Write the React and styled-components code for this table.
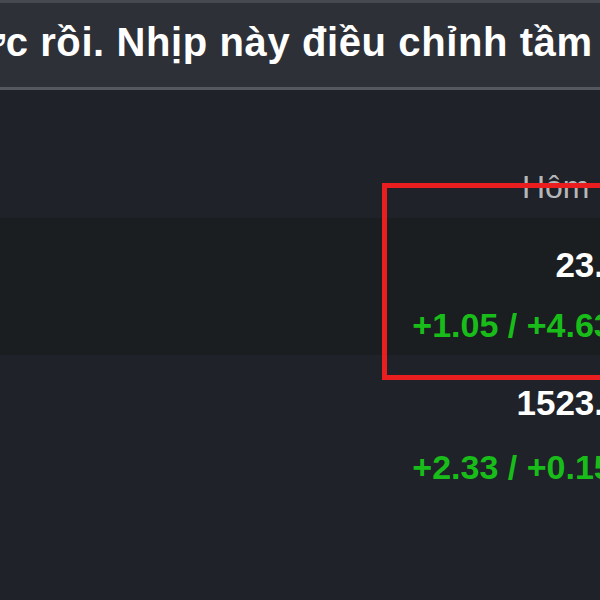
import styled, { createGlobalStyle } from "styled-components";

const GlobalStyle = createGlobalStyle`
	html, body {
		margin: 0;
		padding: 0;
		background: #1f2229;
		overflow: hidden;
	}
	body {
		font-family: "Liberation Sans", Arial, sans-serif;
	}
`;

const Viewport = styled.div`
	width: 600px;
	height: 600px;
	overflow: hidden;
	background: #1f2229;
`;

const TopBar = styled.div`
	height: 84px;
	border-top: 3px solid #464950;
	border-bottom: 3px solid #55585f;
	background: #2d3037;
	display: flex;
	align-items: flex-start;
	overflow: hidden;
	white-space: nowrap;
`;

const Headline = styled.h2`
	margin: 17px 0 0 -78px;
	color: #ffffff;
	font-size: 40px;
	line-height: 44px;
	font-weight: 700;
	letter-spacing: 0.6px;
`;

const Table = styled.div`
	position: relative;
	width: 650px;
`;

const Row = styled.div`
	display: grid;
	grid-template-columns: 1fr 280px;
	height: ${(p) => p.$height}px;
	background: ${(p) => (p.$dark ? "#1b1e21" : "#1f2229")};
`;

const Cell = styled.div`
	display: flex;
	flex-direction: column;
	align-items: flex-end;
	justify-content: ${(p) => (p.$bottom ? "flex-end" : "flex-start")};
	padding: ${(p) => p.$pad};
`;

const ColTitle = styled.span`
	color: #b6b7b9;
	font-size: 32px;
	line-height: 1;
`;

const Price = styled.span`
	color: #ffffff;
	font-size: 35px;
	font-weight: 700;
	line-height: 1;
`;

const Change = styled.span`
	margin-top: ${(p) => p.$gap}px;
	color: ${(p) => (p.$down ? "#e0312b" : "#19bd19")};
	font-size: 34px;
	font-weight: 700;
	line-height: 1;
`;

const Highlight = styled.div`
	position: absolute;
	left: 382px;
	top: 93px;
	width: 300px;
	height: 187px;
	border: 5px solid #ea1e1e;
	pointer-events: none;
`;

const rows = [
	{ price: "23.75", change: "+1.05 / +4.63%", dark: true, top: 29, gap: 26 },
	{ price: "1523.75", change: "+2.33 / +0.15%", dark: false, top: 30, gap: 30 },
];

export default function App() {
	return (
		<Viewport>
			<GlobalStyle />
			<TopBar>
				<Headline>được rồi. Nhịp này điều chỉnh tầm 5 - 10 điểm nữa</Headline>
			</TopBar>
			<Table>
				<Row $height={128}>
					<div />
					<Cell $bottom $pad="0 0 15px 0">
						<ColTitle>Hôm nay</ColTitle>
					</Cell>
				</Row>
				{rows.map((r) => (
					<Row key={r.price} $height={137} $dark={r.dark}>
						<div />
						<Cell $pad={`${r.top}px 7px 0 0`}>
							<Price>{r.price}</Price>
							<Change $gap={r.gap}>{r.change}</Change>
						</Cell>
					</Row>
				))}
				<Highlight />
			</Table>
		</Viewport>
	);
}
